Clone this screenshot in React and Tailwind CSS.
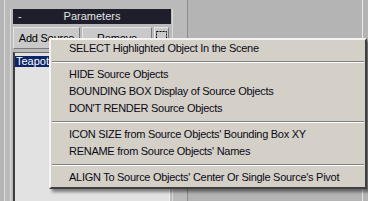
import React from "react";

const items = [
  { label: "SELECT Highlighted Object In the Scene" },
  { sep: true },
  { label: "HIDE Source Objects" },
  { label: "BOUNDING BOX Display of Source Objects" },
  { label: "DON'T RENDER Source Objects" },
  { sep: true },
  { label: "ICON SIZE from Source Objects' Bounding Box XY" },
  { label: "RENAME from Source Objects' Names" },
  { sep: true },
  { label: "ALIGN To Source Objects' Center Or Single Source's Pivot" },
];

function SelectIcon() {
  return (
    <svg width="11" height="11" viewBox="0 0 11 11">
      <rect x="0.5" y="0.5" width="10" height="10" fill="none" stroke="#000" strokeDasharray="2 1" />
    </svg>
  );
}

function ContextMenu() {
  return (
    <div className="absolute left-[49px] top-[38px] w-[318px] bg-[#d4d0c8] border-t-2 border-l-2 border-t-[#f4f4f4] border-l-[#f4f4f4] border-r-2 border-b-2 border-r-[#404040] border-b-[#404040] pb-px shadow-[3px_3px_3px_rgba(0,0,0,0.45)] flex flex-col">
      {items.map((it, i) =>
        it.sep ? (
          <div key={i} className="h-[9px] flex items-center px-px">
            <div className="w-full border-t border-t-[#808080] border-b border-b-white" />
          </div>
        ) : (
          <div key={i} className="h-[17px] flex items-center pl-[18px] text-[11px] tracking-[-0.28px] text-[#0a0a14] whitespace-nowrap">
            {it.label}
          </div>
        )
      )}
    </div>
  );
}

export default function App() {
  return (
    <div
      className="relative w-[368px] h-[201px] overflow-hidden bg-[#b4b4b4] flex"
      style={{ fontFamily: '"Liberation Sans", Arial, sans-serif' }}
    >
      <div className="w-[4px]" />
      {/* rollout panel */}
      <div className="w-[184px] h-full border-l border-l-[#dedede] border-r border-r-[#8c8c8c] bg-[#bababa] pl-[5px] pt-[9px]">
        <div className="w-[163px] h-full border-l border-l-[#dadada] border-r border-r-[#dadada] pl-[2px] flex flex-col">
          <div className="w-[158px] h-[15px] bg-[#1f1f2b] flex items-center text-[11px] text-[#e4e4e4]">
            <span className="w-[12px] pl-[5px]">-</span>
            <span className="flex-1 text-center pr-[12px]">Parameters</span>
          </div>
          <div className="flex gap-[2px] mt-[3px] h-[22px] tracking-[-0.2px]">
            <button className="w-[67px] h-full bg-[#c9c9c9] border border-t-[#e6e6e6] border-l-[#e6e6e6] border-r-[#7a7a7a] border-b-[#7a7a7a] text-[11px] text-black">
              Add Source
            </button>
            <button className="w-[70px] h-full bg-[#c9c9c9] border border-t-[#e6e6e6] border-l-[#e6e6e6] border-r-[#7a7a7a] border-b-[#7a7a7a] text-[11px] text-black">
              Remove
            </button>
            <button className="w-[15px] h-full bg-[#c9c9c9] border border-t-[#e6e6e6] border-l-[#e6e6e6] border-r-[#7a7a7a] border-b-[#7a7a7a] flex justify-center pt-[3px]">
              <SelectIcon />
            </button>
          </div>
          <div className="mt-[3px] w-[157px] flex-1 bg-[#e2e2e2] border-l-2 border-l-[#3c3c3c] border-t border-t-[#6a6a6a] border-r border-r-[#f0f0f0] pt-[3px]">
            <div className="h-[11px] w-full bg-[#0a246a] text-white text-[11px] leading-[11px] pl-px">Teapot</div>
          </div>
        </div>
      </div>
      <div className="w-[174px] h-full" />
      <div className="w-px h-full bg-[#e6e6e6]" />
      <div className="flex-1" />
      <ContextMenu />
    </div>
  );
}
